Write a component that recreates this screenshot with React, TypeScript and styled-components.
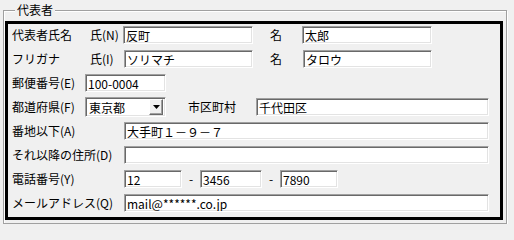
import styled, { createGlobalStyle } from 'styled-components';

const GlobalStyle = createGlobalStyle`
  html, body {
    margin: 0;
    padding: 0;
    background: #f0f0f0;
  }
  body {
    font-family: "Noto Sans CJK JP", "Noto Sans", sans-serif;
    font-size: 12px;
    color: #000;
  }
`;

const GroupBox = styled.div`
  position: relative;
  box-sizing: border-box;
  width: 504px;
  height: 214px;
  margin: 10px 0 0 3px;
  padding: 10px 3px 0 1px;
  border: 1px solid #a0a0a0;
  box-shadow: inset 1px 1px #fff, 1px 1px #fff;
`;

const Legend = styled.span`
  position: absolute;
  top: -8px;
  left: 11px;
  padding: 0 2px;
  line-height: 14px;
  background: #f0f0f0;
`;

const Panel = styled.div`
  box-sizing: border-box;
  width: 498px;
  height: 199px;
  border: 3px solid #000;
  padding: 0 0 0 4px;
  display: flex;
  flex-direction: column;
`;

const Row = styled.div`
  display: flex;
  align-items: flex-start;
  height: 24px;
  padding-top: 2px;
  box-sizing: border-box;
`;

const Label = styled.span<{ $w: number; $ml?: number }>`
  flex-shrink: 0;
  width: ${(p) => p.$w}px;
  margin-left: ${(p) => p.$ml ?? 0}px;
  line-height: 18px;
  white-space: nowrap;
`;

const Field = styled.input<{ $w: number }>`
  box-sizing: border-box;
  flex-shrink: 0;
  width: ${(p) => p.$w}px;
  height: 18px;
  margin: 0;
  padding: 0 2px;
  border: 1px solid;
  border-color: #a0a0a0 #fff #fff #a0a0a0;
  box-shadow: inset 1px 1px #696969, inset -1px -1px #e3e3e3;
  background: #fff;
  font: inherit;
  font-size: 12px;
  color: #000;
  outline: none;
`;

const Dash = styled.span`
  flex-shrink: 0;
  width: 18px;
  line-height: 18px;
  text-align: center;
`;

const Combo = styled.div<{ $w: number }>`
  box-sizing: border-box;
  flex-shrink: 0;
  width: ${(p) => p.$w}px;
  height: 20px;
  margin-top: -1px;
  display: flex;
  align-items: center;
  padding: 0 2px 0 2px;
  border: 1px solid;
  border-color: #a0a0a0 #fff #fff #a0a0a0;
  box-shadow: inset 1px 1px #696969, inset -1px -1px #e3e3e3;
  background: #fff;
`;

const ComboText = styled.span`
  flex: 1;
  padding-left: 1px;
  white-space: nowrap;
`;

const ComboButton = styled.span`
  box-sizing: border-box;
  width: 14px;
  height: 16px;
  display: flex;
  align-items: center;
  justify-content: center;
  background: #f0f0f0;
  border: 1px solid;
  border-color: #fff #696969 #696969 #fff;
  box-shadow: inset -1px -1px #a0a0a0;
`;

const Arrow = () => (
  <svg width="7" height="4" viewBox="0 0 7 4">
    <polygon points="0,0 7,0 3.5,4" fill="#000" />
  </svg>
);

export default function App() {
  return (
    <>
      <GlobalStyle />
      <GroupBox>
        <Legend>代表者</Legend>
        <Panel>
          <Row>
            <Label $w={78}>代表者氏名</Label>
            <Label $w={33}>氏(N)</Label>
            <Field $w={130} defaultValue="反町" readOnly />
            <Label $w={32} $ml={17}>名</Label>
            <Field $w={130} defaultValue="太郎" readOnly />
          </Row>
          <Row>
            <Label $w={78}>フリガナ</Label>
            <Label $w={34}>氏(I)</Label>
            <Field $w={129} defaultValue="ソリマチ" readOnly />
            <Label $w={33} $ml={17}>名</Label>
            <Field $w={129} defaultValue="タロウ" readOnly />
          </Row>
          <Row>
            <Label $w={73}>郵便番号(E)</Label>
            <Field $w={81} defaultValue="100-0004" readOnly />
          </Row>
          <Row>
            <Label $w={73}>都道府県(F)</Label>
            <Combo $w={81}>
              <ComboText>東京都</ComboText>
              <ComboButton>
                <Arrow />
              </ComboButton>
            </Combo>
            <Label $w={68} $ml={22}>市区町村</Label>
            <Field $w={233} defaultValue="千代田区" readOnly />
          </Row>
          <Row>
            <Label $w={112}>番地以下(A)</Label>
            <Field $w={365} defaultValue="大手町１－９－７" readOnly />
          </Row>
          <Row>
            <Label $w={112}>それ以降の住所(D)</Label>
            <Field $w={365} defaultValue="" readOnly />
          </Row>
          <Row>
            <Label $w={112}>電話番号(Y)</Label>
            <Field $w={58} defaultValue="12" readOnly />
            <Dash>-</Dash>
            <Field $w={62} defaultValue="3456" readOnly />
            <Dash>-</Dash>
            <Field $w={58} defaultValue="7890" readOnly />
          </Row>
          <Row>
            <Label $w={112}>メールアドレス(Q)</Label>
            <Field $w={365} defaultValue="mail@******.co.jp" readOnly />
          </Row>
        </Panel>
      </GroupBox>
    </>
  );
}
